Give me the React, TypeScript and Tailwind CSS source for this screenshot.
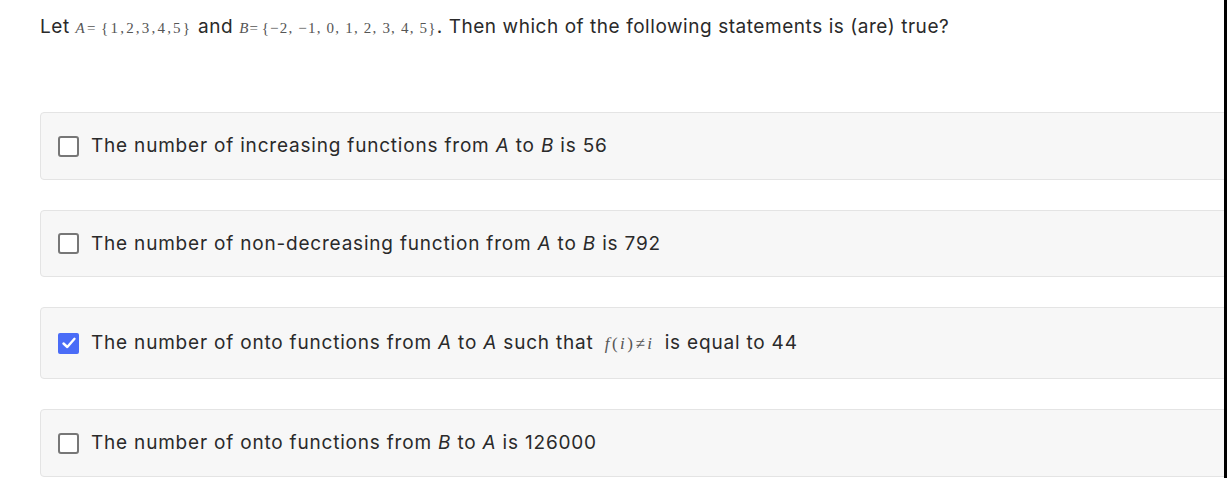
import React from "react";

const M = ({ children, t }: { children: React.ReactNode; t: string }) => (
  <span className={`text-[#555] ${t}`} style={{ fontFamily: '"Liberation Serif", serif' }}>
    {children}
  </span>
);

const I = ({ children }: { children: React.ReactNode }) => <i className="italic">{children}</i>;

function Box({ checked }: { checked?: boolean }) {
  if (checked) {
    return (
      <div className="w-[21px] h-[21px] rounded-[2px] bg-[#4a6cf7] flex items-center justify-center shrink-0">
        <svg width="16" height="16" viewBox="0 0 16 16" fill="none">
          <path d="M2.5 8.5 L6.3 12 L13.5 3.8" stroke="white" strokeWidth="2.4" strokeLinecap="round" strokeLinejoin="round" />
        </svg>
      </div>
    );
  }
  return <div className="w-[21px] h-[21px] rounded-[3px] border-2 border-[#777] bg-white shrink-0" />;
}

function Card({ checked, children, h }: { checked?: boolean; children: React.ReactNode; h: string }) {
  return (
    <div className={`w-[1220px] ${h} shrink-0 bg-[#f7f7f7] border border-[#e4e4e4] rounded-[4px] flex items-center pl-[17px] gap-[12px]`}>
      <Box checked={checked} />
      <div className="text-[19px] text-[#2a2a2a] tracking-[0.8px] pt-[1px]">{children}</div>
    </div>
  );
}

export default function App() {
  return (
    <div className="w-[1227px] h-[478px] bg-white flex" style={{ fontFamily: 'Inter, "Noto Sans", sans-serif' }}>
      <div className="w-[1224px] h-full overflow-hidden flex flex-col pl-[40px]">
        <div className="h-[112px] shrink-0 pt-[13px] text-[19px] text-[#2a2a2a] leading-[28px] tracking-[0.55px]">
          Let <M t="text-[15px] tracking-[2.2px]"><I>A</I>=&#8202;{"{1,2,3,4,5}"}</M> and{" "}
          <M t="text-[15px] tracking-[1.2px]"><I>B</I>=&#8202;{"{−2, −1, 0, 1, 2, 3, 4, 5}"}</M>. Then which of the following statements is (are) true?
        </div>
        <div className="flex flex-col gap-[30px]">
          <Card h="h-[68px]">
            The number of increasing functions from <I>A</I> to <I>B</I> is 56
          </Card>
          <Card h="h-[67px]">
            The number of non-decreasing function from <I>A</I> to <I>B</I> is 792
          </Card>
          <Card h="h-[72px]" checked>
            The number of onto functions from <I>A</I> to <I>A</I> such that{" "}
            <M t="text-[17px] tracking-[2.5px] ml-[5px] mr-[4px]"><I>f</I>(<I>i</I>)≠<I>i</I></M> is equal to 44
          </Card>
          <Card h="h-[68px]">
            The number of onto functions from <I>B</I> to <I>A</I> is 126000
          </Card>
        </div>
      </div>
      <div className="w-[3px] h-full bg-black" />
    </div>
  );
}
